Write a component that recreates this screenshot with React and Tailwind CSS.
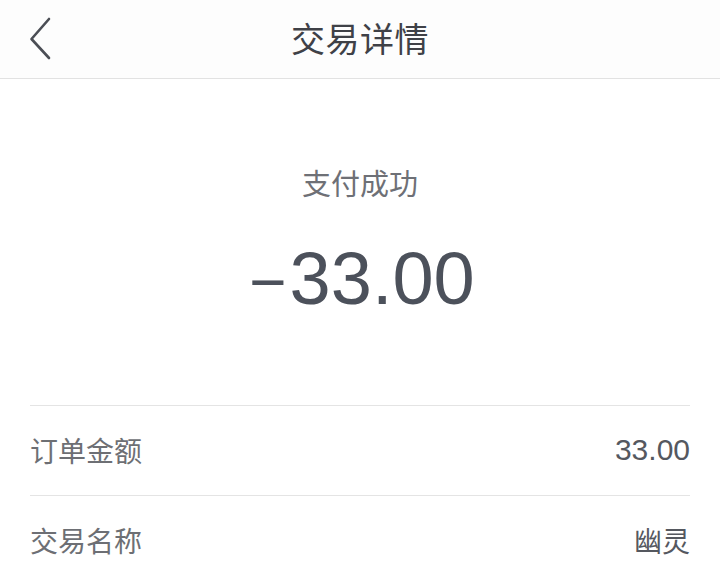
export default function App() {
  const cjk = { fontFamily: '"Noto Sans CJK SC", "Noto Sans", sans-serif' };
  const num = { fontFamily: '"Liberation Sans", Arial, sans-serif' };
  return (
    <div className="w-[720px] h-[574px] overflow-hidden bg-white flex flex-col" style={cjk}>
      <header className="h-[79px] shrink-0 bg-[#fdfdfd] border-b border-[#e2e2e2] grid grid-cols-[1fr_auto_1fr] items-center">
        <div className="pl-[29px] flex items-center">
          <svg width="22" height="44" viewBox="0 0 22 44" fill="none">
            <path d="M20 2 L2.5 22 L20 41" stroke="#4b4e55" strokeWidth="2.6" strokeLinecap="round" strokeLinejoin="round" />
          </svg>
        </div>
        <h1 className="text-[34px] leading-[40px] text-[#3f4147] font-normal pb-[3px] tracking-[0.5px]">交易详情</h1>
        <div />
      </header>
      <main className="flex flex-col items-center pt-[83px]">
        <div className="text-[29px] leading-[40px] text-[#6e7076]">支付成功</div>
        <div className="mt-[32px] h-[90px] text-[74px] leading-[90px] text-[#4c515b] pl-[4px]" style={num}>
          <span className="text-[64px] leading-[60px] mr-[3px]">−</span>33.00
        </div>
      </main>
      <section className="mt-[81px] mx-[30px] flex flex-col">
        <div className="h-[90px] border-t border-[#e4e4e4] flex items-center justify-between pb-[2px]">
          <span className="text-[28px] text-[#6d6f74]">订单金额</span>
          <span className="text-[30px] text-[#55585f]" style={num}>33.00</span>
        </div>
        <div className="h-[90px] border-t border-[#e4e4e4] flex items-center justify-between pb-[2px]">
          <span className="text-[28px] text-[#6d6f74]">交易名称</span>
          <span className="text-[28px] text-[#55585f]">幽灵</span>
        </div>
      </section>
    </div>
  );
}
